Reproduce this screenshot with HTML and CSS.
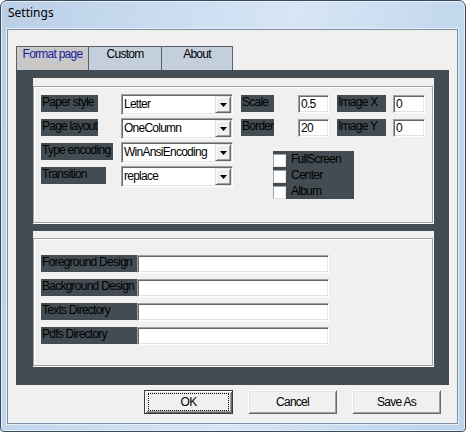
FILE: index.html
```html
<!DOCTYPE html>
<html>
<head>
<meta charset="utf-8">
<title>Settings</title>
<link rel="stylesheet" href="styles.css">
</head>
<body>
<div class="window">
  <div class="titlebar">Settings</div>
  <div class="client">
    <div class="tabs">
      <div class="tab tab-active w72">Format page</div>
      <div class="tab w73">Custom</div>
      <div class="tab tab-last w72">About</div>
    </div>
    <div class="panel">
      <div class="group group-top">
        <div class="etched etched-top">
          <div class="col-left">
            <div class="row">
              <div class="label w57">Paper style</div>
              <div class="combo"><span class="combo-text">Letter</span><span class="drop"><svg width="7" height="4" viewBox="0 0 7 4"><path d="M0 0h7L3.5 4z" fill="#000"/></svg></span></div>
            </div>
            <div class="row">
              <div class="label w57">Page layout</div>
              <div class="combo"><span class="combo-text">OneColumn</span><span class="drop"><svg width="7" height="4" viewBox="0 0 7 4"><path d="M0 0h7L3.5 4z" fill="#000"/></svg></span></div>
            </div>
            <div class="row">
              <div class="label w72">Type encoding</div>
              <div class="combo"><span class="combo-text">WinAnsiEncoding</span><span class="drop"><svg width="7" height="4" viewBox="0 0 7 4"><path d="M0 0h7L3.5 4z" fill="#000"/></svg></span></div>
            </div>
            <div class="row">
              <div class="label w65">Transition</div>
              <div class="combo"><span class="combo-text">replace</span><span class="drop"><svg width="7" height="4" viewBox="0 0 7 4"><path d="M0 0h7L3.5 4z" fill="#000"/></svg></span></div>
            </div>
          </div>
          <div class="col-right">
            <div class="grid">
              <div><div class="label w33">Scale</div></div>
              <div><div class="field w31">0.5</div></div>
              <div><div class="label w49">Image X</div></div>
              <div><div class="field w32">0</div></div>
              <div><div class="label w33">Border</div></div>
              <div><div class="field w31">20</div></div>
              <div><div class="label w49">Image Y</div></div>
              <div><div class="field w32">0</div></div>
            </div>
            <div class="checks">
              <div class="check"><span class="box"></span><span>FullScreen</span></div>
              <div class="check"><span class="box"></span><span>Center</span></div>
              <div class="check"><span class="box"></span><span>Album</span></div>
            </div>
          </div>
        </div>
      </div>
      <div class="group group-bottom">
        <div class="etched etched-bottom">
          <div class="row"><div class="label w96">Foreground Design</div><div class="field w192"></div></div>
          <div class="row"><div class="label w96">Background Design</div><div class="field w192"></div></div>
          <div class="row"><div class="label w96">Texts Directory</div><div class="field w192"></div></div>
          <div class="row"><div class="label w96">Pdfs Directory</div><div class="field w192"></div></div>
        </div>
      </div>
    </div>
    <div class="buttons">
      <button class="btn btn-default"><span class="focus">OK</span></button>
      <button class="btn"><span class="btn-label">Cancel</span></button>
      <button class="btn"><span class="btn-label">Save As</span></button>
    </div>
  </div>
</div>
</body>
</html>
```

FILE: styles.css
```css
* { box-sizing: border-box; }
html, body { margin: 0; padding: 0; }
body {
  width: 466px;
  height: 432px;
  overflow: hidden;
  background: #ffffff;
  font-family: "Liberation Sans", Arial, sans-serif;
  font-size: 12px;
  letter-spacing: -0.75px;
  color: #000;
}

.window {
  width: 466px;
  height: 432px;
  border: 1px solid #3b4b5e;
  border-radius: 7px 7px 4px 4px;
  background: linear-gradient(100deg, #b9cfe7 0%, #c9dcf0 30%, #d7e6f6 55%, #c6daef 80%, #bcd2ea 100%);
  box-shadow: inset 0 0 0 1px #e4eef9;
  display: flex;
  flex-direction: column;
  overflow: hidden;
}

.titlebar {
  height: 28px;
  padding: 4px 0 0 7px;
  font-family: "Noto Sans", "Open Sans", sans-serif;
  font-size: 12px;
  letter-spacing: 0;
  line-height: 16px;
  color: #000;
}

.client {
  flex: 1;
  margin: 0 7px 7px 6px;
  border: 1px solid #7b8da3;
  box-shadow: 0 0 0 1px #e6eef8;
  background: #f0f0f0;
  padding: 16px 8px 0 8px;
}

/* tabs */
.tabs { display: flex; height: 24px; }
.tab {
  height: 24px;
  border-top: 1px solid #5c6166;
  border-left: 1px solid #5c6166;
  background: #c3cfdb;
  text-align: center;
  line-height: 15px;
  white-space: nowrap;
}
.tab-active { background: #c8c8c8; color: #1c1c9e; }
.tab-last { border-right: 1px solid #5c6166; }

/* dark panel */
.panel {
  width: 433px;
  height: 315px;
  background: #434c52;
  padding: 8px 15px 0 17px;
  display: flex;
  flex-direction: column;
  gap: 7px;
}
.group { width: 401px; background: #f0f0f0; }
.group-top { height: 146px; padding-top: 8px; }
.group-bottom { height: 136px; padding-top: 7px; }
.etched {
  width: 400px;
  border: 1px solid #a0a0a0;
  box-shadow: 1px 1px 0 #ffffff, inset 1px 1px 0 #ffffff;
}
.etched-top { height: 137px; padding: 7px 0 0 7px; display: flex; }
.etched-bottom { height: 128px; padding: 16px 0 0 7px; }

.col-left { width: 192px; }
.col-right { margin-left: 8px; }
.row { display: flex; align-items: flex-start; height: 24px; }

.label {
  height: 17px;
  margin-top: 1px;
  padding-left: 1px;
  background: #434c52;
  line-height: 15px;
  white-space: nowrap;
  overflow: hidden;
}
.etched-bottom .label { margin-top: 0; }
.w33 { width: 33px; }
.w49 { width: 49px; }
.w57 { width: 57px; }
.w65 { width: 65px; }
.w72 { width: 72px; }
.w73 { width: 73px; }
.w96 { width: 96px; }
.w31 { width: 31px; }
.w32 { width: 32px; }
.w192 { width: 192px; }

/* combo box */
.combo {
  margin-left: auto;
  width: 112px;
  height: 21px;
  padding: 1px;
  display: flex;
  background: #ffffff;
  border: 1px solid;
  border-color: #a0a0a0 #ffffff #ffffff #a0a0a0;
  box-shadow: inset 1px 1px 0 #696969, inset -1px -1px 0 #e3e3e3;
}
.combo-text {
  flex: 1;
  padding-left: 1px;
  line-height: 17px;
  white-space: nowrap;
  overflow: hidden;
}
.drop {
  width: 16px;
  height: 17px;
  display: flex;
  align-items: center;
  justify-content: center;
  background: #f0f0f0;
  border: 1px solid;
  border-color: #e3e3e3 #696969 #696969 #e3e3e3;
  box-shadow: inset 1px 1px 0 #ffffff, inset -1px -1px 0 #a0a0a0;
}
.drop svg { display: block; margin-top: 1px; }

/* text fields */
.field {
  height: 18px;
  background: #ffffff;
  border: 1px solid;
  border-color: #a0a0a0 #ffffff #ffffff #a0a0a0;
  box-shadow: inset 1px 1px 0 #696969, inset -1px -1px 0 #e3e3e3;
  padding-left: 2px;
  line-height: 16px;
  white-space: nowrap;
}
.grid .field { margin-top: 1px; }

.grid {
  display: grid;
  grid-template-columns: 57px 39px 56px 32px;
  grid-auto-rows: 24px;
}

/* checkboxes */
.checks {
  margin: 9px 0 0 32px;
  width: 81px;
  height: 48px;
  background: #434c52;
}
.check { display: flex; align-items: flex-start; height: 16px; line-height: 16px; }
.box {
  width: 13px;
  height: 13px;
  margin: 3px 5px 0 0;
  background: #ffffff;
  border: 1px solid;
  border-color: #a0a0a0 #e3e3e3 #e3e3e3 #a0a0a0;
}

/* buttons */
.buttons {
  display: flex;
  justify-content: flex-end;
  gap: 15px;
  margin-top: 5px;
  padding-right: 8px;
}
.btn {
  width: 89px;
  height: 24px;
  padding: 0;
  display: flex;
  align-items: stretch;
  background: #f0f0f0;
  border: 1px solid;
  border-color: #ffffff #696969 #696969 #ffffff;
  box-shadow: inset 1px 1px 0 #e3e3e3, inset -1px -1px 0 #a0a0a0;
  font: inherit;
  letter-spacing: inherit;
  color: #000;
}
.btn-label {
  flex: 1;
  display: flex;
  align-items: center;
  justify-content: center;
}
.btn-default {
  border: 1px solid #3a3a3a;
  box-shadow: inset 1px 1px 0 #ffffff, inset -1px -1px 0 #696969, inset 2px 2px 0 #e3e3e3, inset -2px -2px 0 #a0a0a0;
}
.focus {
  flex: 1;
  margin: 2px 3px 2px 3px;
  border: 1px dotted #000;
  display: flex;
  align-items: center;
  justify-content: center;
}
```
